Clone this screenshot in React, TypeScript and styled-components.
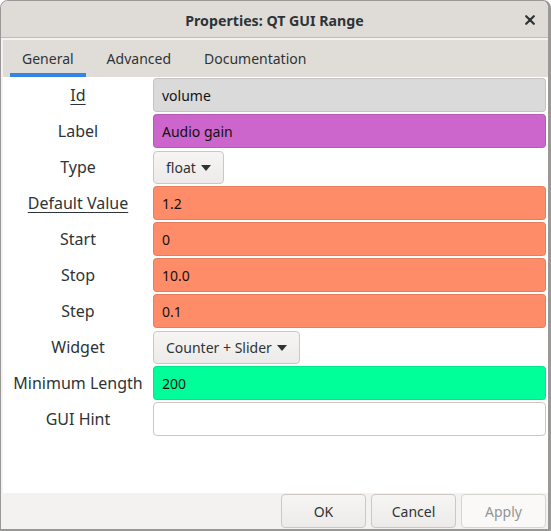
import React from "react";
import styled, { createGlobalStyle } from "styled-components";

const Global = createGlobalStyle`
  html, body { margin: 0; padding: 0; background: #ffffff; }
  * { box-sizing: border-box; }
  body { font-family: "Noto Sans", "Open Sans", sans-serif; }
`;

const Window = styled.div`
  width: 551px;
  height: 531px;
  border: 1px solid #9a9896;
  border-bottom-width: 2px;
  border-right-width: 3px;
  border-radius: 8px 8px 0 0;
  background: #f3f2f1;
  display: flex;
  flex-direction: column;
  overflow: hidden;
`;

const TitleBar = styled.div`
  height: 37px;
  flex: 0 0 37px;
  background: #dfdcd8;
  border-bottom: 1px solid #bfbbb7;
  display: flex;
  align-items: center;
  justify-content: center;
  position: relative;
`;

const Title = styled.div`
  font-weight: 700;
  font-size: 14.2px;
  color: #2e3436;
  margin-top: 2px;
`;

const Close = styled.div`
  position: absolute;
  right: 12px;
  top: 13px;
  width: 12px;
  height: 12px;
  display: flex;
  align-items: center;
  justify-content: center;
`;

const Body = styled.div`
  flex: 1;
  display: flex;
  flex-direction: column;
  padding: 2px 0 0 2px;
  background: #f3f2f1;
`;

const Notebook = styled.div`
  flex: 1;
  display: flex;
  flex-direction: column;
  background: #ffffff;
`;

const TabStrip = styled.div`
  height: 37px;
  flex: 0 0 37px;
  background: #e0ddd9;
  display: flex;
  align-items: stretch;
  padding-left: 7px;
`;

const Tab = styled.div<{ $active?: boolean }>`
  padding: 3px 12px 0;
  margin-right: 9px;
  display: flex;
  align-items: center;
  font-size: 14px;
  color: #2e3436;
  border-bottom: 4px solid ${(p) => (p.$active ? "#3584e4" : "transparent")};
`;

const Form = styled.div`
  display: grid;
  grid-template-columns: 150px 1fr;
  grid-auto-rows: 34px;
  row-gap: 2px;
  padding: 1px 2px 0 0;
  flex: 1;
  align-content: start;
`;

const Label = styled.div<{ $u?: boolean }>`
  display: flex;
  align-items: center;
  justify-content: center;
  font-size: 16px;
  color: #2e3436;
  text-decoration: ${(p) => (p.$u ? "underline" : "none")};
  text-underline-offset: 3px;
  text-decoration-thickness: 1px;
`;

const Field = styled.div<{ $bg: string }>`
  background: ${(p) => p.$bg};
  border: 1px solid ${(p) => (p.$bg === "#ffffff" ? "#cdc7c2" : "rgba(0,0,0,0.10)")};
  border-radius: 4px;
  display: flex;
  align-items: center;
  padding-left: 8px;
  font-size: 14px;
  color: #111111;
`;

const DropCell = styled.div`
  display: flex;
  align-items: center;
`;

const Drop = styled.div`
  height: 33px;
  display: flex;
  align-items: center;
  gap: 5px;
  padding: 0 12px 0 12px;
  border: 1px solid #cdc7c2;
  border-radius: 4px;
  background: linear-gradient(#f6f5f4, #edebe9);
  font-size: 14px;
  color: #2e3436;
`;

const Arrow = styled.span`
  width: 0;
  height: 0;
  border-left: 5.5px solid transparent;
  border-right: 5.5px solid transparent;
  border-top: 6px solid #2e3436;
  margin-top: 1px;
`;

const ButtonBar = styled.div`
  flex: 0 0 36px;
  display: flex;
  justify-content: flex-end;
  gap: 5px;
  padding: 1px 2px 0 0;
  background: #f3f2f1;
`;

const Button = styled.div<{ $disabled?: boolean }>`
  width: 85px;
  height: 34px;
  border: 1px solid ${(p) => (p.$disabled ? "#d8d4d0" : "#cdc7c2")};
  border-radius: 4px;
  background: ${(p) => (p.$disabled ? "#faf9f8" : "linear-gradient(#f6f5f4, #edebe9)")};
  display: flex;
  align-items: center;
  justify-content: center;
  font-size: 14px;
  color: ${(p) => (p.$disabled ? "#929595" : "#2e3436")};
`;

type Row = { label: string; u?: boolean; kind: "field" | "drop"; value: string; bg?: string };

const rows: Row[] = [
  { label: "Id", u: true, kind: "field", value: "volume", bg: "#dadada" },
  { label: "Label", kind: "field", value: "Audio gain", bg: "#cc66cc" },
  { label: "Type", kind: "drop", value: "float" },
  { label: "Default Value", u: true, kind: "field", value: "1.2", bg: "#ff8c69" },
  { label: "Start", kind: "field", value: "0", bg: "#ff8c69" },
  { label: "Stop", kind: "field", value: "10.0", bg: "#ff8c69" },
  { label: "Step", kind: "field", value: "0.1", bg: "#ff8c69" },
  { label: "Widget", kind: "drop", value: "Counter + Slider" },
  { label: "Minimum Length", kind: "field", value: "200", bg: "#00ff99" },
  { label: "GUI Hint", kind: "field", value: "", bg: "#ffffff" },
];

export default function App() {
  return (
    <>
      <Global />
      <Window>
        <TitleBar>
          <Title>Properties: QT GUI Range</Title>
          <Close>
            <svg width="10" height="10" viewBox="0 0 10 10">
              <path d="M1.2 1.2 L8.8 8.8 M8.8 1.2 L1.2 8.8" stroke="#2e3436" strokeWidth="2.2" strokeLinecap="round" />
            </svg>
          </Close>
        </TitleBar>
        <Body>
          <Notebook>
            <TabStrip>
              <Tab $active>General</Tab>
              <Tab>Advanced</Tab>
              <Tab>Documentation</Tab>
            </TabStrip>
            <Form>
              {rows.map((r) => (
                <React.Fragment key={r.label}>
                  <Label $u={r.u}>{r.label}</Label>
                  {r.kind === "field" ? (
                    <Field $bg={r.bg!}>{r.value}</Field>
                  ) : (
                    <DropCell>
                      <Drop>
                        {r.value}
                        <Arrow />
                      </Drop>
                    </DropCell>
                  )}
                </React.Fragment>
              ))}
            </Form>
          </Notebook>
          <ButtonBar>
            <Button>OK</Button>
            <Button>Cancel</Button>
            <Button $disabled>Apply</Button>
          </ButtonBar>
        </Body>
      </Window>
    </>
  );
}
